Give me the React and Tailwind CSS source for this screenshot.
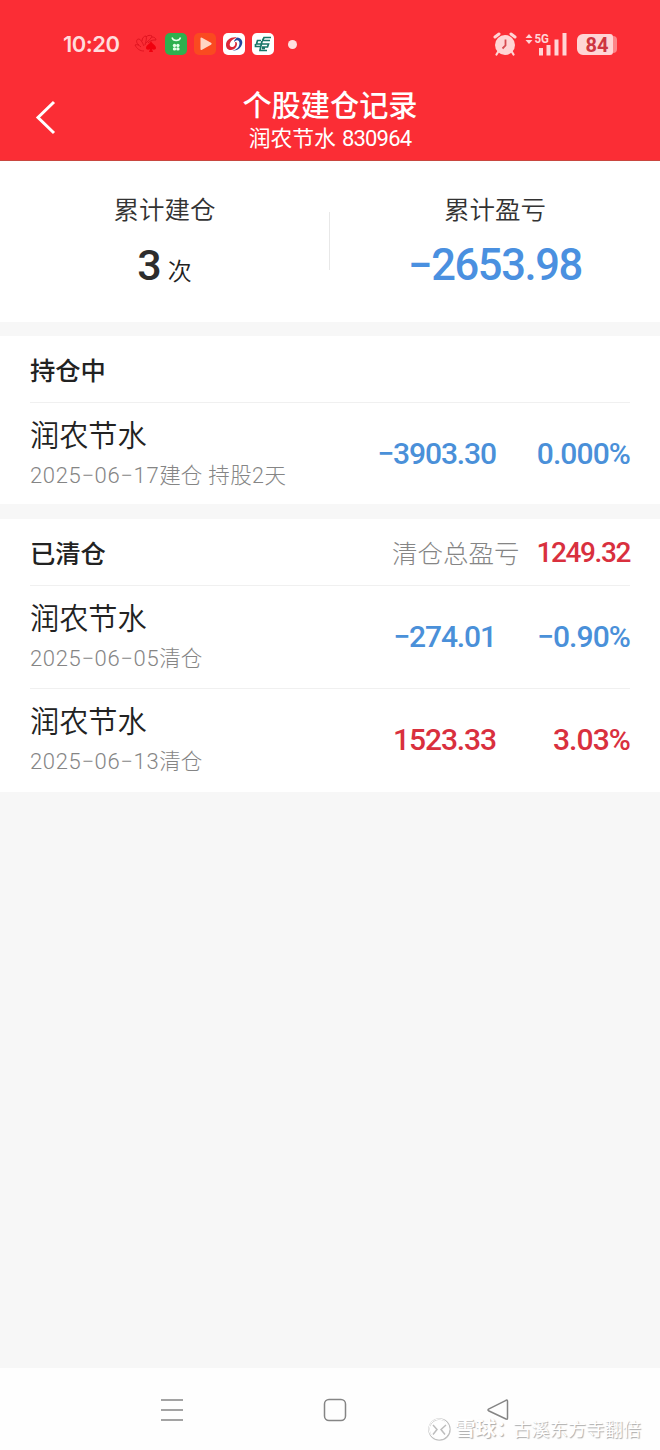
import React from "react";

const cleared = [
  { name: "润农节水", date: "2025−06−05", amount: "−274.01", rate: "−0.90%", color: "text-[#4a90d9]" },
  { name: "润农节水", date: "2025−06−13", amount: "1523.33", rate: "3.03%", color: "text-[#d9303e]" },
];

export default function App() {
  return (
    <div className="flex h-[1450px] w-[660px] flex-col overflow-hidden bg-[#f7f7f7] font-['Roboto','Noto_Sans_CJK_SC',sans-serif] text-[#222]">
      <header className="h-[161px] border-b border-[#c9463f] bg-[#fb2d35] text-white">
        <StatusBar />
        <TitleBar />
      </header>

      <Summary />

      <section className="mt-[14px] h-[168px] bg-white px-[30px]">
        <div className="flex h-[67px] items-center border-b border-[#f0f0f0]">
          <SectionTitle>持仓中</SectionTitle>
        </div>
        <Row
          name="润农节水"
          date="2025−06−17"
          note="建仓"
          hold="持股2天"
          amount="−3903.30"
          rate="0.000%"
          color="text-[#4a90d9]"
        />
      </section>

      <section className="mt-[15px] h-[273px] bg-white px-[30px]">
        <div className="flex h-[67px] items-center justify-between border-b border-[#f0f0f0]">
          <SectionTitle>已清仓</SectionTitle>
          <div className="flex items-center">
            <span className="mt-[6px] mr-[17px] text-[25.5px] leading-none font-light text-[#858585]">清仓总盈亏</span>
            <span className="mt-px text-[28px] leading-none font-medium tracking-[-1.4px] text-[#d9303e]">1249.32</span>
          </div>
        </div>
        {cleared.map((item, i) => (
          <div key={item.date} className={i === 0 ? "h-[103px] border-b border-[#f0f0f0]" : "h-[103px]"}>
            <Row {...item} note="清仓" />
          </div>
        ))}
      </section>

      <NavBar />
    </div>
  );
}

function SectionTitle({ children }) {
  return <h2 className="mt-[6px] text-[25.3px] leading-none font-medium">{children}</h2>;
}

function Row({ name, date, note, hold, amount, rate, color }) {
  return (
    <div className="flex h-[102px] items-center">
      <div className="flex flex-col">
        <span className="text-[29.2px] leading-[36px] font-[350]">{name}</span>
        <span className="mt-[7px] flex text-[21.5px] leading-[30px] font-light text-[#858585]">
          <span className="text-[22px] tracking-[0.65px]">{date}</span>
          <span>{note}</span>
          {hold && <span className="ml-[6px] tracking-[0.4px]">{hold}</span>}
        </span>
      </div>
      <span className={`mb-px ml-auto text-[30px] leading-none font-medium tracking-[-1.1px] ${color}`}>{amount}</span>
      <span className={`mb-px w-[134px] text-right text-[30px] leading-none font-medium tracking-[-0.9px] ${color}`}>{rate}</span>
    </div>
  );
}

function Summary() {
  return (
    <section className="flex h-[161px] items-start bg-white">
      <div className="flex w-[329px] flex-col items-center pt-[31px]">
        <span className="text-[25.5px] leading-[36px] font-[350] text-[#333]">累计建仓</span>
        <div className="mt-[12px] flex items-baseline gap-[7px] leading-[50px]">
          <span className="text-[43px] font-medium tracking-[-1px] text-[#2d2d2d]">3</span>
          <span className="text-[24px] font-[350]">次</span>
        </div>
      </div>
      <div className="mt-[51px] h-[58px] w-px bg-[#e8e8e8]" />
      <div className="flex w-[330px] flex-col items-center pt-[31px]">
        <span className="text-[25.5px] leading-[36px] font-[350] text-[#333]">累计盈亏</span>
        <span className="mt-[13px] text-[43.5px] leading-[50px] font-medium tracking-[-1.4px] text-[#4a90e0]">−2653.98</span>
      </div>
    </section>
  );
}

function TitleBar() {
  return (
    <div className="grid h-[72px] grid-cols-[90px_1fr_90px]">
      <svg className="mt-[10px] ml-[34px]" width="24" height="38" viewBox="0 0 24 38" fill="none" stroke="#fff" strokeWidth="3">
        <path d="M20 4 4 19.500 20 35" />
      </svg>
      <div className="flex flex-col items-center pt-px">
        <h1 className="text-[29.2px] leading-[34px] font-medium">个股建仓记录</h1>
        <div className="mt-[2px] flex gap-[6px] text-[21.8px] leading-[28px]">
          <span>润农节水</span>
          <span className="text-[22px] tracking-[-0.8px]">830964</span>
        </div>
      </div>
    </div>
  );
}

function StatusBar() {
  return (
    <div className="flex h-[88px] items-center pl-[63px] text-[#ffdcdc]">
      <span className="w-[71px] text-[22px] font-semibold leading-none font-['Inter',sans-serif] tracking-[-0.5px]">10:20</span>

      {/* petal flower with spade */}
      <svg width="24" height="20" viewBox="0 0 24 20" fill="none" stroke="#e01420" strokeWidth="1">
        <path d="M10 17C6 17 3 15 1 11c2-1 4 0 6 2M5 11C2 9 2 6 4 5c3 0 4 3 6 7M8 7c0-3 2-5 4-5 1 2 0 5-1 9M12 3c2-2 4-2 6-1-1 3-3 4-6 7M18 3c2 0 4 1 4 3-3 0-5 0-8 3" />
        <path d="M17 7c1 3 5 4 5 7 0 2-3 2-4 1l1 3h-4l1-3c-1 1-4 1-4-1 0-3 4-4 5-7Z" fill="#f0000e" stroke="none" />
      </svg>

      <svg className="ml-[7px]" width="22" height="22" viewBox="0 0 22 22" fill="none">
        <rect width="22" height="22" rx="5" fill="#2eb04e" />
        <path d="M7 4.500c1 4 7.500 4 8.500 0" stroke="#e5ffe9" strokeWidth="1.400" />
        <g fill="#e5ffe9">
          <circle cx="9.500" cy="12.500" r="1.700" />
          <circle cx="12.900" cy="12.500" r="1.700" />
          <circle cx="9.500" cy="15.900" r="1.700" />
          <circle cx="12.900" cy="15.900" r="1.700" />
        </g>
      </svg>

      <svg className="ml-[7px]" width="22" height="22" viewBox="0 0 22 22">
        <rect width="22" height="22" rx="5" fill="#fa4a20" />
        <path d="M6.500 5.500q0-1.500 1.500-.8l9 5q1.500 1 0 2l-9 5q-1.500.8-1.500-.8Z" fill="#ffd5c4" />
      </svg>

      <svg className="ml-[7px]" width="22" height="22" viewBox="0 0 22 22">
        <rect width="22" height="22" rx="5" fill="#fff" />
        <path d="M14 4.500C8 3.500 3 7 3 12c0 3 2 5 5 5 3 0 6-3 6-6 0-2-1-2-2-2 1 3-1 5-3 5C5 14 6 7 14 4.500Z" fill="#dc2838" />
        <path d="M14.500 4.500c5 1 6 5 3.500 9-2 3-5 4.500-8.500 4 5-1 7-4 7-7.500 0-3-3-4-5.500-1 0-2 1.500-3.500 3.500-4.500Z" fill="#24479c" />
      </svg>

      <svg className="ml-[7px]" width="22" height="22" viewBox="0 0 22 22" fill="none" stroke="#197567" strokeWidth="1.700">
        <rect width="22" height="22" rx="5" fill="#fff" stroke="none" />
        <path d="M19 4.500h-7l-1.500 3M18 7.500H10M9 7.500H5.500l-1 3.500h12l-1 3H10M3.500 11v2.500h5M10 8l-2 9.500h7M10 15.500h3" />
      </svg>

      <span className="ml-[14px] size-[9px] rounded-full bg-[#ffe0e0]" />

      <svg className="ml-[196px]" width="24" height="26" viewBox="0 0 24 26" fill="none">
        <circle cx="12" cy="14" r="10" fill="#ffd5d5" />
        <path d="m2 6 4-3M22 6l-4-3" stroke="#ffd5d5" strokeWidth="3" strokeLinecap="round" />
        <path d="m5 21-1.500 2.500M19 21l1.500 2.500" stroke="#ffd5d5" strokeWidth="2.200" strokeLinecap="round" />
        <path d="M12.500 8.500v6l-3 3" stroke="#d64a50" strokeWidth="1.800" />
      </svg>

      <svg className="ml-[8px]" width="43" height="26" viewBox="0 0 43 26" fill="#ffd5d5">
        <path d="m4 3 3.500 4h-7ZM4 13 .5 9h7Z" />
        <text x="9.500" y="11.500" fontSize="13.500" fontWeight="700" fontFamily="Roboto, sans-serif" textLength="14.500" lengthAdjust="spacingAndGlyphs">5G</text>
        <rect x="14" y="17" width="4" height="7.500" />
        <rect x="21.500" y="14" width="4" height="10.500" />
        <rect x="29.500" y="8.500" width="4" height="16" />
        <rect x="37.500" y="2" width="4" height="22.500" />
      </svg>

      <div className="ml-[9px] flex items-center">
        <span className="flex h-[21px] w-[36px] items-center justify-center rounded-[6px] rounded-r-[3px] bg-[#ffd5d5] pt-px pl-1 text-[20px] leading-none font-bold text-[#ce3540]">84</span>
        <span className="h-[17px] w-[4px] rounded-r-[4px] bg-[#fd8588]" />
      </div>
    </div>
  );
}

function NavBar() {
  return (
    <nav className="relative mt-auto h-[82px] bg-[#fefefe]">
      <div className="grid h-full grid-cols-[344px_auto_auto_1fr] items-center pt-px">
        <svg className="ml-[160px]" width="24" height="24" viewBox="0 0 24 24" stroke="#858585" strokeWidth="1.600">
          <path d="M1 2h22M1 12h22M1 22h22" />
        </svg>
        <svg className="-ml-[21px]" width="24" height="24" viewBox="0 0 24 24" fill="none" stroke="#858585" strokeWidth="1.500">
          <rect x="1.500" y="1.500" width="21" height="21" rx="4.500" />
        </svg>
        <svg className="ml-[139px]" width="24" height="24" viewBox="0 0 24 24" fill="none" stroke="#858585" strokeWidth="1.500" strokeLinejoin="round">
          <path d="M2.500 11.200 20 2.300q1.500-.7 1.500 1V20q0 2-1.500 1L2.500 12.700q-1-.7 0-1.500Z" />
        </svg>
      </div>

      <div className="absolute top-[49px] left-[427px] flex items-center whitespace-nowrap text-white [text-shadow:1px_1px_1px_#aaa]">
        <svg width="25" height="25" viewBox="0 0 25 25" fill="none">
          <circle cx="12.500" cy="12.500" r="10.500" stroke="#c0c0c0" strokeWidth="1.500" />
          <circle cx="12" cy="12" r="10" stroke="#fff" strokeWidth="1" />
          <path d="m6 8 4 4.500-4 5M19 8l-5 4.500 4 5" stroke="#bdbdbd" strokeWidth="1.500" />
        </svg>
        <span className="ml-[3px] w-[58px] text-[20.5px] leading-[25px] font-bold">雪球：</span>
        <span className="text-[18.3px] leading-[25px]">古溪东方寺翻倍</span>
      </div>
    </nav>
  );
}
